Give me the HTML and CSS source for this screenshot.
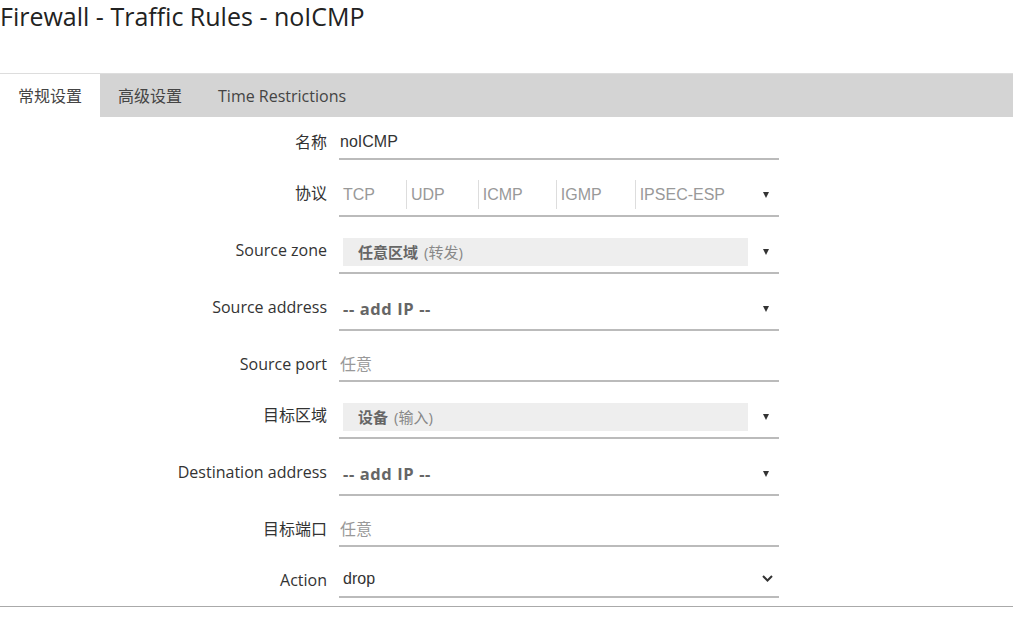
FILE: index.html
```html
<!DOCTYPE html>
<html lang="zh-CN">
<head>
<meta charset="utf-8">
<title>Firewall - Traffic Rules - noICMP</title>
<link rel="stylesheet" href="styles.css">
</head>
<body>
<h2 class="page-title">Firewall - Traffic Rules - noICMP</h2>

<div class="tabs">
  <div class="tab active">常规设置</div>
  <div class="tab">高级设置</div>
  <div class="tab">Time Restrictions</div>
</div>

<div class="form">
  <div class="row">
    <div class="label">名称</div>
    <div class="field text-field"><span class="value">noICMP</span></div>
  </div>

  <div class="row">
    <div class="label">协议</div>
    <div class="field proto-field">
      <ul class="proto-list">
        <li>TCP</li>
        <li>UDP</li>
        <li>ICMP</li>
        <li>IGMP</li>
        <li>IPSEC-ESP</li>
      </ul>
      <span class="caret"></span>
    </div>
  </div>

  <div class="row">
    <div class="label">Source zone</div>
    <div class="field select-field">
      <div class="zone-box"><b>任意区域</b><span class="zone-note">(转发)</span></div>
      <span class="caret"></span>
    </div>
  </div>

  <div class="row">
    <div class="label">Source address</div>
    <div class="field select-field">
      <span class="add-ip">-- add IP --</span>
      <span class="caret"></span>
    </div>
  </div>

  <div class="row">
    <div class="label">Source port</div>
    <div class="field text-field"><span class="placeholder">任意</span></div>
  </div>

  <div class="row">
    <div class="label">目标区域</div>
    <div class="field select-field">
      <div class="zone-box"><b>设备</b><span class="zone-note">(输入)</span></div>
      <span class="caret"></span>
    </div>
  </div>

  <div class="row">
    <div class="label">Destination address</div>
    <div class="field select-field">
      <span class="add-ip">-- add IP --</span>
      <span class="caret"></span>
    </div>
  </div>

  <div class="row">
    <div class="label">目标端口</div>
    <div class="field text-field"><span class="placeholder">任意</span></div>
  </div>

  <div class="row">
    <div class="label">Action</div>
    <div class="field action-field">
      <span class="value">drop</span>
      <svg class="chevron" width="11" height="7" viewBox="0 0 11 7"><polyline points="1,1 5.5,5.5 10,1" fill="none" stroke="#333" stroke-width="2"/></svg>
    </div>
  </div>
</div>
</body>
</html>
```

FILE: styles.css
```css
* { box-sizing: border-box; }

body {
  margin: 0;
  background: #fff;
  color: #333;
  font-family: "Open Sans", "Noto Sans CJK SC", sans-serif;
  font-size: 16px;
}

.page-title {
  margin: 0 0 41px 0;
  font-size: 25px;
  line-height: 32px;
  font-weight: 400;
  color: #222;
}

.tabs {
  display: flex;
  height: 44px;
  border-top: 1px solid #ddd;
  background: #d4d4d4;
}

.tab {
  padding: 0 18px;
  line-height: 44px;
  font-size: 16px;
  color: #444;
}

.tab.active {
  background: #fff;
}

.form {
  display: flex;
  flex-direction: column;
  gap: 20px;
  padding: 12px 0 8px;
  border-bottom: 1px solid #aaa;
  box-shadow: 0 1px 1px #ddd;
}

.row {
  display: grid;
  grid-template-columns: 327px 440px;
  column-gap: 12px;
  align-items: start;
}

.label {
  text-align: right;
  line-height: 26px;
  color: #333;
  white-space: nowrap;
}

.field {
  display: flex;
  align-items: center;
  border-bottom: 2px solid #bbb;
}

.text-field {
  height: 31px;
  padding: 2px 0 5px 1px;
  line-height: 22px;
  align-items: flex-start;
}

.value {
  font-family: "Liberation Sans", "Noto Sans CJK SC", sans-serif;
  color: #333;
}

.placeholder {
  color: #999;
}

.proto-field {
  height: 37px;
  padding: 0 10px 6px 0;
}

.proto-list {
  display: flex;
  margin: 0;
  padding: 0;
  list-style: none;
  height: 29px;
}

.proto-list li {
  padding: 0 33px 0 4px;
  line-height: 29px;
  color: #999;
  font-family: "Liberation Sans", sans-serif;
  border-left: 1px solid #ddd;
}

.proto-list li:first-child {
  border-left: none;
  padding-right: 31px;
}

.proto-list li:last-child {
  padding-right: 0;
}

.select-field {
  height: 37px;
  padding: 0 10px 6px 0;
}

.zone-box {
  width: 405px;
  height: 28px;
  margin-left: 4px;
  padding-left: 15px;
  background: #eee;
  line-height: 28px;
  color: #777;
}

.zone-box b {
  font-size: 15px;
  font-weight: 700;
  color: #666;
}

.zone-note {
  margin-left: 6px;
  font-size: 15px;
  color: #888;
}

.add-ip {
  margin-left: 4px;
  font-size: 16.5px;
  font-weight: 700;
  letter-spacing: 0.6px;
  color: #666;
  line-height: 28px;
}

.caret {
  margin-left: auto;
  width: 0;
  height: 0;
  border-left: 3.5px solid transparent;
  border-right: 3.5px solid transparent;
  border-top: 6px solid #333;
}

.action-field {
  height: 31px;
  padding: 0 6px 6px 4px;
  line-height: 24px;
}

.chevron {
  margin-left: auto;
}
```
